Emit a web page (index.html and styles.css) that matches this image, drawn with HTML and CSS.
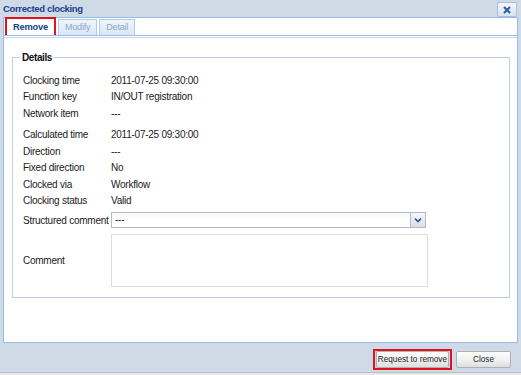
FILE: index.html
```html
<!DOCTYPE html>
<html lang="en">
<head>
    <meta charset="UTF-8">
    <title>Corrected clocking</title>
    <link rel="stylesheet" href="styles.css">
</head>
<body>
    <div class="window">
        <div class="title-bar">
            <span class="title">Corrected clocking</span>
            <span class="close-tool">
                <svg width="10" height="10" viewBox="0 0 10 10"><path d="M2 2 L8 8 M8 2 L2 8" stroke="#2a5ba8" stroke-width="2"/></svg>
            </span>
        </div>
        <div class="panel">
            <div class="tab-strip">
                <span class="tab active">Remove</span>
                <span class="tab">Modify</span>
                <span class="tab">Detail</span>
            </div>
            <div class="tab-spacer"></div>
            <div class="tab-body">
                <fieldset class="details">
                    <legend>Details</legend>
                    <div class="row"><span class="label">Clocking time</span><span>2011-07-25 09:30:00</span></div>
                    <div class="row"><span class="label">Function key</span><span>IN/OUT registration</span></div>
                    <div class="row"><span class="label">Network item</span><span>---</span></div>
                    <div class="row gap"><span class="label">Calculated time</span><span>2011-07-25 09:30:00</span></div>
                    <div class="row"><span class="label">Direction</span><span>---</span></div>
                    <div class="row"><span class="label">Fixed direction</span><span>No</span></div>
                    <div class="row"><span class="label">Clocked via</span><span>Workflow</span></div>
                    <div class="row"><span class="label">Clocking status</span><span>Valid</span></div>
                    <div class="row field"><span class="label">Structured comment</span>
                        <div class="combo">
                            <span class="combo-text">---</span>
                            <span class="combo-trigger">
                                <svg width="8" height="6" viewBox="0 0 8 6"><path d="M1 1.5 L4 4.5 L7 1.5" stroke="#2a4f8f" stroke-width="1.6" fill="none"/></svg>
                            </span>
                        </div>
                    </div>
                    <div class="row field memo-row"><span class="label">Comment</span><div class="memo"></div></div>
                </fieldset>
            </div>
        </div>
        <div class="footer">
            <span class="btn-mark"><button class="btn">Request to remove</button></span>
            <button class="btn close">Close</button>
        </div>
    </div>
</body>
</html>
```

FILE: styles.css
```css
body {
    margin: 0;
    font-family: "Liberation Sans", Arial, sans-serif;
    font-size: 10px;
    letter-spacing: -0.25px;
    color: #1a1a1a;
    background-color: #e8e8e8;
}
.window {
    width: 521px;
    height: 373px;
    display: flex;
    flex-direction: column;
    background-color: #cfdae7;
    border-bottom: 1px solid #b9bec6;
    box-sizing: border-box;
}
.title-bar {
    height: 17px;
    display: flex;
    align-items: center;
    justify-content: space-between;
    padding: 0 4px 0 3px;
}
.title {
    font-weight: bold;
    font-size: 9.5px;
    color: #15428b;
    letter-spacing: -0.35px;
}
.close-tool {
    width: 18px;
    height: 13px;
    margin-top: 2px;
    border: 1px solid #a9c0e0;
    border-radius: 2px;
    background: linear-gradient(#f3f7fc, #d7e3f2);
    display: flex;
    align-items: center;
    justify-content: center;
}
.panel {
    flex: 1;
    margin: 0 3px;
    background-color: #fff;
    border: 1px solid #99bbe8;
    display: flex;
    flex-direction: column;
}
.tab-strip {
    height: 17px;
    display: flex;
    align-items: flex-end;
    padding-left: 1px;
    border-bottom: 1px solid #99bbe8;
}
.tab {
    height: 15px;
    line-height: 15px;
    padding: 0 6px;
    margin-right: 2px;
    font-size: 9px;
    letter-spacing: -0.2px;
    border: 1px solid #aecaec;
    border-bottom: none;
    background: linear-gradient(#f0f5fb, #dbe6f4);
    color: #8ea7cb;
}
.tab.active {
    height: 16px;
    line-height: 16px;
    background: #fff;
    color: #15428b;
    font-weight: bold;
    font-size: 9.3px;
    border: 2px solid #e0121e;
    border-bottom: none;
    padding: 0 6px;
}
.tab-spacer {
    height: 1px;
    background-color: #fff;
    border-bottom: 1px solid #c6d8f0;
}
.tab-body {
    flex: 1;
    padding: 14px 7px 0 8px;
}
.details {
    margin: 0;
    border: 1px solid #b8cfee;
    padding: 9px 10px 9px 10px;
    height: 246px;
    box-sizing: border-box;
}
.details legend {
    font-weight: bold;
    letter-spacing: -0.4px;
    color: #111;
    padding: 0 2px;
    margin-left: -3px;
}
.row {
    display: flex;
    align-items: center;
    height: 16.5px;
}
.row.gap {
    margin-top: 5px;
}
.label {
    width: 88px;
    flex-shrink: 0;
    white-space: nowrap;
}
.row.field {
    height: auto;
    margin-top: 3px;
}
.row.memo-row {
    margin-top: 6px;
}
.combo {
    width: 315px;
    height: 16px;
    display: flex;
    border: 1px solid #b5b8c8;
    box-sizing: border-box;
    background: linear-gradient(#f7f7f7, #fff 40%);
}
.combo-text {
    flex: 1;
    line-height: 14px;
    padding-left: 3px;
}
.combo-trigger {
    width: 14px;
    border-left: 1px solid #b5b8c8;
    background: linear-gradient(#f4f6f9, #d9dfe7);
    display: flex;
    align-items: center;
    justify-content: center;
}
.memo {
    width: 317px;
    height: 53px;
    border: 1px solid #dedede;
    box-sizing: border-box;
}
.footer {
    height: 29px;
    display: flex;
    align-items: center;
    justify-content: flex-end;
    gap: 4px;
    padding: 3px 10px 0 0;
    box-sizing: border-box;
}
.btn-mark {
    border: 2px solid #e0121e;
    padding: 0 1px;
    display: flex;
}
.btn {
    font-family: "Liberation Sans", Arial, sans-serif;
    font-size: 8.2px;
    color: #222;
    height: 17px;
    padding: 0 1px;
    border: 1px solid #b0b0b0;
    border-radius: 2px;
    background: linear-gradient(#fdfdfd, #f1f1f1 50%, #dedede);
}
.btn.close {
    width: 55px;
    height: 17px;
}
```
